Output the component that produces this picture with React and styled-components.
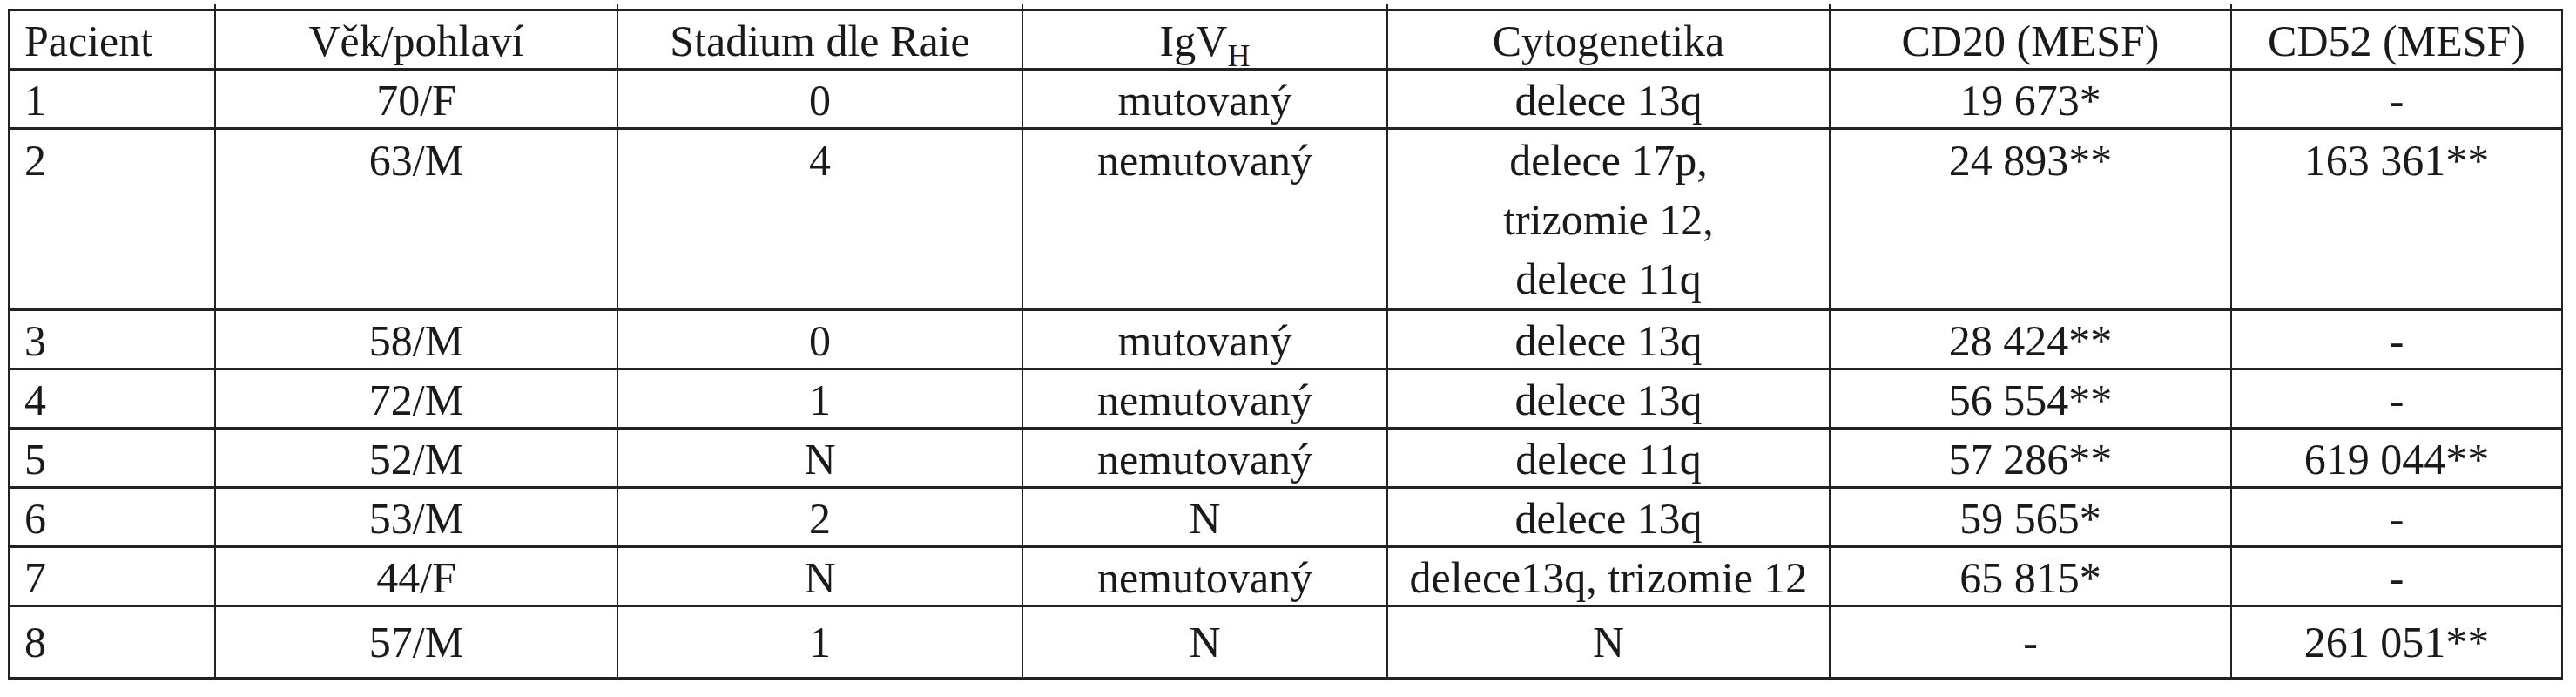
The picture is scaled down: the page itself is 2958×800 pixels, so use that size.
import React from "react";
import styled, { createGlobalStyle } from "styled-components";

const GlobalStyle = createGlobalStyle`
  html, body {
    margin: 0;
    padding: 0;
    background: #fff;
  }
  body {
    font-family: "Liberation Serif", "Times New Roman", serif;
    color: #1a1a1a;
  }
`;

const Page = styled.div`
  padding: 10px 0 0 9px;
`;

const Table = styled.table`
  table-layout: fixed;
  border-collapse: collapse;
  width: 2934px;
  font-size: 50px;
`;

const HeadCell = styled.th`
  position: relative;
  font-weight: 400;
  text-align: ${(p) => (p.$left ? "left" : "center")};
  vertical-align: top;
  padding: 4px 8px 0 ${(p) => (p.$left ? "17px" : "8px")};
  line-height: 61px;
  border-top: 3px solid #222;
  border-bottom: 3px solid #222;
  border-left: 2px solid #222;
  border-right: 2px solid #222;
  white-space: nowrap;

  &:not(:first-child)::before {
    content: "";
    position: absolute;
    top: -8px;
    left: -2px;
    width: 2px;
    height: 8px;
    background: #222;
  }
`;

const Cell = styled.td`
  text-align: ${(p) => (p.$left ? "left" : "center")};
  vertical-align: top;
  padding: ${(p) =>
    p.$tall ? "1px 8px 0" : p.$last ? "10px 8px 9px" : "4px 8px 0"};
  padding-left: ${(p) => (p.$left ? "17px" : "8px")};
  line-height: ${(p) => (p.$tall ? "68px" : "61px")};
  border-top: 3px solid #222;
  border-bottom: 3px solid #222;
  border-left: 2px solid #222;
  border-right: 2px solid #222;
  white-space: nowrap;
`;

const Sub = styled.sub`
  font-size: 36px;
  line-height: 0;
  vertical-align: -12px;
`;

const widths = [237, 462, 465, 419, 508, 461, 380];

const rows = [
  ["1", "70/F", "0", "mutovaný", "delece 13q", "19 673*", "-"],
  [
    "2",
    "63/M",
    "4",
    "nemutovaný",
    ["delece 17p,", "trizomie 12,", "delece 11q"],
    "24 893**",
    "163 361**",
  ],
  ["3", "58/M", "0", "mutovaný", "delece 13q", "28 424**", "-"],
  ["4", "72/M", "1", "nemutovaný", "delece 13q", "56 554**", "-"],
  ["5", "52/M", "N", "nemutovaný", "delece 11q", "57 286**", "619 044**"],
  ["6", "53/M", "2", "N", "delece 13q", "59 565*", "-"],
  ["7", "44/F", "N", "nemutovaný", "delece13q, trizomie 12", "65 815*", "-"],
  ["8", "57/M", "1", "N", "N", "-", "261 051**"],
];

const App = () => {
  return (
    <Page>
      <GlobalStyle />
      <Table>
        <colgroup>
          {widths.map((w, i) => (
            <col key={i} style={{ width: w }} />
          ))}
        </colgroup>
        <thead>
          <tr>
            <HeadCell $left>Pacient</HeadCell>
            <HeadCell>Věk/pohlaví</HeadCell>
            <HeadCell>Stadium dle Raie</HeadCell>
            <HeadCell>
              IgV<Sub>H</Sub>
            </HeadCell>
            <HeadCell>Cytogenetika</HeadCell>
            <HeadCell>CD20 (MESF)</HeadCell>
            <HeadCell>CD52 (MESF)</HeadCell>
          </tr>
        </thead>
        <tbody>
          {rows.map((row, r) => {
            const tall = row.some((c) => Array.isArray(c));
            const last = r === rows.length - 1;
            return (
              <tr key={r}>
                {row.map((c, i) => (
                  <Cell key={i} $left={i === 0} $tall={tall} $last={last}>
                    {Array.isArray(c)
                      ? c.map((line, k) => (
                          <React.Fragment key={k}>
                            {k > 0 && <br />}
                            {line}
                          </React.Fragment>
                        ))
                      : c}
                  </Cell>
                ))}
              </tr>
            );
          })}
        </tbody>
      </Table>
    </Page>
  );
};

export default App;
